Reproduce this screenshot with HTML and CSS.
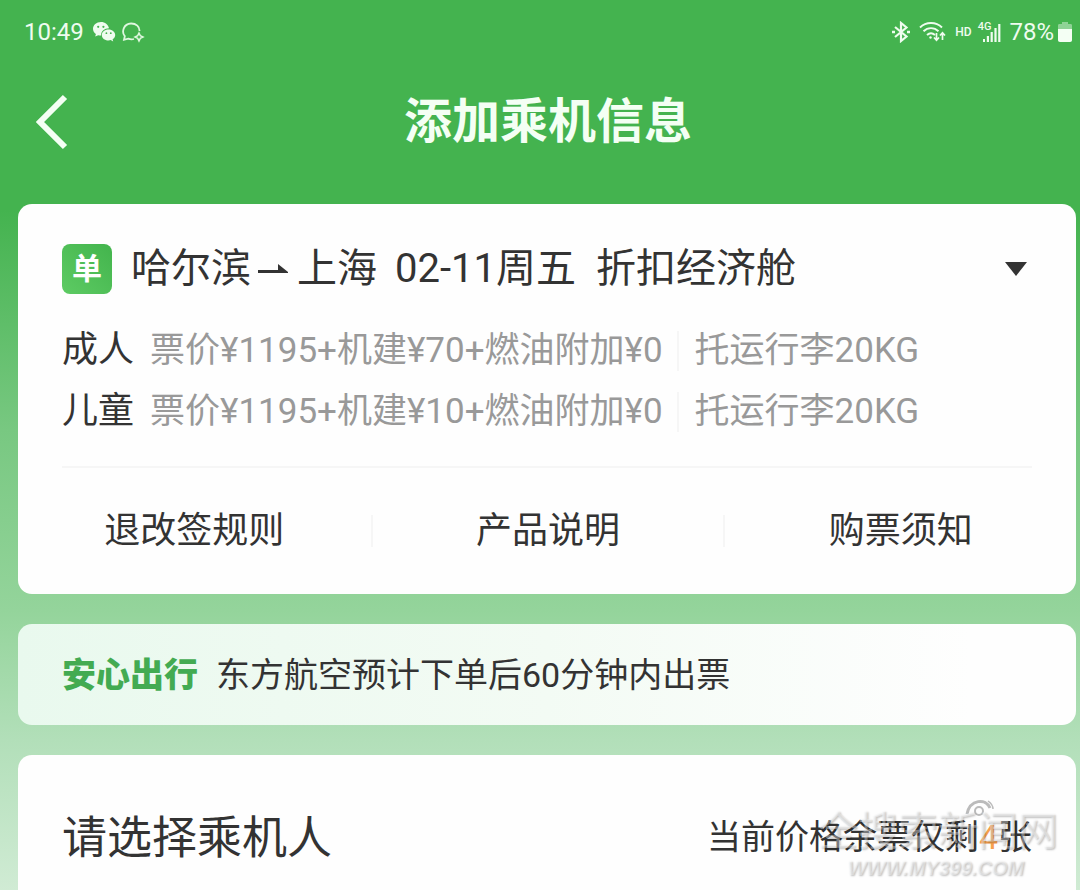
FILE: index.html
```
<!DOCTYPE html>
<html lang="zh-CN">
<head>
    <meta charset="UTF-8">
    <meta name="viewport" content="width=device-width, initial-scale=1.0">
    <title>添加乘机信息</title>
    <link rel="stylesheet" href="styles.css">
</head>
<body>
    <div class="status">
        <div class="status-left">
            <span class="time">10:49</span>
            <svg class="wechat" width="24" height="22" viewBox="0 0 24 22">
                <path d="M9 1C4.400 1 1 4 1 7.800c0 2.200 1.100 4 2.900 5.200L3.200 15.600 6.200 14.200c.9.3 1.800.4 2.800.4C9 10 12.500 7.400 17 7.300 16.300 3.600 13 1 9 1z" fill="#effcef"/>
                <path d="M16.500 8.400c-4 0-6.700 2.500-6.700 5.500s2.700 5.500 6.700 5.500c.8 0 1.500-.1 2.200-.3l2.500 1.300-.6-2.200c1.600-1 2.600-2.500 2.600-4.300 0-3-2.800-5.500-6.700-5.500z" fill="#effcef"/>
                <g fill="#44b34f"><circle cx="6.200" cy="5.800" r="1.100"/><circle cx="11.400" cy="5.800" r="1.100"/><circle cx="14.400" cy="12.200" r=".9"/><circle cx="18.800" cy="12.200" r=".9"/></g>
            </svg>
            <svg class="chat" width="24" height="22" viewBox="0 0 24 22" fill="none" stroke="#dff7df" stroke-width="1.800">
                <path d="M13 18c-2 .5-4 .3-5.800-.4L3 18.800l.8-3.600C.3 11 2.500 2.700 10 2.500c5.200-.1 8.800 3.400 8.500 7.500"/>
                <path d="M18 12l1.300 2.700L22 16l-2.700 1.300L18 20l-1.300-2.700L14 16l2.700-1.300z" stroke-width="1.500"/>
            </svg>
        </div>
        <div class="status-right">
            <svg width="20" height="22" viewBox="0 0 20 22" fill="none" stroke="#effcef" stroke-width="2.200">
                <path d="M4 6l11.500 9.500L10 20V2l5.500 4.500L4 16"/>
                <path d="M1 11h3M16 11h3" stroke-width="2.600"/>
            </svg>
            <svg class="wifi" width="27" height="22" viewBox="0 0 27 22" fill="none" stroke="#effcef" stroke-width="1.900">
                <path d="M1 6.500C7 .5 17 .5 23 6.500M4.500 10.300c4.300-4.200 10.700-4.200 15 0M8 14c2.500-2.300 5.500-2.300 8 0"/>
                <circle cx="11.500" cy="16.500" r="1.200" fill="#effcef" stroke="none"/>
                <path d="M17.500 12v7M15 16.500l2.500 2.700 2.500-2.700M23.500 19v-7M21 14.500l2.500-2.700 2.500 2.700" stroke-width="1.700"/>
            </svg>
            <span class="hd">HD</span>
            <span class="net">4G</span>
            <svg class="bars" width="18" height="20" viewBox="0 0 18 20" fill="#effcef">
                <path d="M0 17h2v3H0zM3.800 14h2.200v6H3.800zM7.600 10h2.200v10H7.600zM11.400 6h2.200v14h-2.200zM15.200 2h2.200v18h-2.200z"/>
            </svg>
            <span class="percent">78%</span>
            <svg class="battery" width="14" height="20" viewBox="0 0 14 20">
                <path d="M4 0h6v2h2.500c1 0 1.500.5 1.500 1.500V8H0V3.500C0 2.500.5 2 1.500 2H4z" fill="#8fd396"/>
                <path d="M0 7h14v11c0 1.300-.7 2-2 2H2c-1.300 0-2-.7-2-2z" fill="#f4fff4"/>
            </svg>
        </div>
    </div>

    <header class="header">
        <button class="back" aria-label="返回">
            <svg width="32" height="56" viewBox="0 0 32 56" fill="none" stroke="#f4fff4" stroke-width="6">
                <path d="M29 3L4 28l25 25"/>
            </svg>
        </button>
        <h1>添加乘机信息</h1>
    </header>

    <main class="main">
        <section class="card flight">
            <div class="route">
                <span class="badge">单</span>
                <span class="city">哈尔滨</span>
                <svg class="arrow" width="30" height="10" viewBox="0 0 30 10" fill="#333">
                    <path d="M0 6h20V0l10 8v1H0z"/>
                </svg>
                <span class="city">上海</span>
                <span class="date">02-11周五</span>
                <span class="cabin">折扣经济舱</span>
                <button class="toggle" aria-label="展开">
                    <svg width="24" height="16" viewBox="0 0 24 16" fill="#333"><path d="M1 1h22L12 15z"/></svg>
                </button>
            </div>
            <div class="fares">
                <div class="fare">
                    <span class="who">成人</span>
                    <span class="price">票价¥1195+机建¥70+燃油附加¥0</span>
                    <span class="bag">托运行李20KG</span>
                </div>
                <div class="fare">
                    <span class="who">儿童</span>
                    <span class="price">票价¥1195+机建¥10+燃油附加¥0</span>
                    <span class="bag">托运行李20KG</span>
                </div>
            </div>
            <nav class="rules">
                <a href="#">退改签规则</a>
                <a href="#">产品说明</a>
                <a href="#">购票须知</a>
            </nav>
        </section>

        <section class="card notice">
            <strong>安心出行</strong>
            <span>东方航空预计下单后60分钟内出票</span>
        </section>

        <section class="card passenger">
            <h2>请选择乘机人</h2>
            <p class="left">当前价格余票仅剩<b>4</b>张</p>
            <div class="watermark">
                <svg class="mark-eye" width="32" height="20" viewBox="0 0 32 20" fill="none" stroke="#bbb" stroke-width="3">
                    <path d="M3 15C6 0 22-1 26 9"/>
                    <path d="M24 2c3 2 5 5 5 8" stroke-width="1.500"/>
                    <circle cx="15" cy="12" r="4" stroke-width="2"/>
                </svg>
                <span class="mark-name">全搜索新闻网</span>
                <span class="mark-url">WWW.MY399.COM</span>
            </div>
        </section>
    </main>
</body>
</html>
```
FILE: styles.css
```
* {
    box-sizing: border-box;
}

body {
    margin: 0;
    min-height: 100vh;
    overflow: hidden;
    font-family: Roboto, "Noto Sans CJK SC", sans-serif;
    color: #333;
    background: linear-gradient(#44b34f 0, #44b34f 210px, #78c881 430px, #94d49b 610px, #b2dfb9 740px, #d0ebd4 890px);
}

h1, h2, p {
    margin: 0;
}

button {
    display: flex;
    padding: 0;
    border: none;
    background: none;
    cursor: pointer;
}

.status {
    display: flex;
    justify-content: space-between;
    height: 64px;
    padding: 0 8px 0 24px;
    color: #effcef;
    font-size: 24px;
}

.status-left, .status-right {
    display: flex;
    align-items: center;
}

.wechat {
    margin-left: 8px;
}

.chat {
    margin-left: 5px;
}

.wifi {
    margin-left: 8px;
}

.hd {
    margin-left: 9px;
    font-size: 12px;
    font-weight: 500;
}

.net {
    align-self: flex-start;
    margin: 20px 0 0 6px;
    font-size: 11px;
    font-weight: 500;
    line-height: 14px;
}

.bars {
    margin-left: -8px;
}

.percent {
    margin-left: 8px;
}

.battery {
    margin-left: 4px;
}

.header {
    display: grid;
    grid-template-columns: 32px 1fr 32px;
    align-items: center;
    height: 116px;
    padding: 0 20px 0 36px;
}

h1 {
    color: #f4fff4;
    font-size: 48px;
    font-weight: 700;
    line-height: 60px;
    text-align: center;
}

.main {
    display: flex;
    flex-direction: column;
    gap: 30px;
    padding: 24px 4px 0 18px;
}

.card {
    border-radius: 14px;
    background: #fefefe;
}

.flight {
    padding: 36px 44px 0;
}

.route {
    display: flex;
    align-items: center;
    font-size: 40px;
    line-height: 58px;
}

.badge {
    width: 50px;
    margin-right: 19px;
    border-radius: 8px;
    background: linear-gradient(45deg, #5dcb63, #43b44d);
    color: #fff;
    font-size: 30px;
    font-weight: 700;
    line-height: 50px;
    text-align: center;
}

.arrow {
    margin: 0 9px 0 7px;
}

.date {
    margin-left: 18px;
}

.cabin {
    margin-left: 20px;
}

.toggle {
    margin-left: auto;
    margin-right: 4px;
}

.fares {
    padding: 22px 0 24px;
    border-bottom: 2px solid #f6f6f6;
}

.fare {
    display: flex;
    align-items: center;
    line-height: 61px;
}

.who {
    width: 88px;
    font-size: 36px;
}

.price, .bag {
    color: #999;
    font-size: 35px;
}

.bag {
    margin-left: 14px;
    padding-left: 16px;
    border-left: 2px solid #f6f6f6;
    line-height: 40px;
}

/* three equal cells across the full card */
.rules {
    display: grid;
    grid-template-columns: 1fr 1fr 1fr;
    align-items: center;
    height: 126px;
    margin: 0 -44px;
}

.rules a {
    color: #333;
    font-size: 36px;
    line-height: 32px;
    text-align: center;
    text-decoration: none;
}

.rules a + a {
    border-left: 2px solid #f6f6f6;
}

.notice {
    display: flex;
    align-items: center;
    height: 101px;
    padding: 0 44px 4px;
    background: linear-gradient(90deg, #e9f9ee, #f3fbf4 50%, #fefefe 90%);
    font-size: 34px;
}

.notice strong {
    margin-right: 18px;
    color: #43ab52;
    font-weight: 900;
}

.passenger {
    position: relative;
    display: flex;
    align-items: center;
    justify-content: space-between;
    height: 160px;
    padding: 0 44px 2px;
}

h2 {
    font-size: 45px;
    font-weight: 400;
}

.left {
    font-size: 34px;
}

.left b {
    color: #f7a14d;
    font-weight: 400;
}

/* embossed stamp over the corner of the card */
.watermark {
    position: absolute;
    top: 44px;
    right: 18px;
    display: grid;
    justify-items: end;
    color: rgba(255, 255, 255, 0.4);
    text-shadow: 1px 1px 2px rgba(0, 0, 0, 0.25);
}

.mark-eye {
    margin-right: 62px;
}

.mark-name {
    margin-top: -12px;
    font-size: 40px;
    font-weight: 400;
    line-height: 50px;
}

.mark-url {
    margin-right: 34px;
    font-family: "Liberation Sans", sans-serif;
    font-size: 20px;
    font-style: italic;
    font-weight: 700;
    line-height: 22px;
}
```
